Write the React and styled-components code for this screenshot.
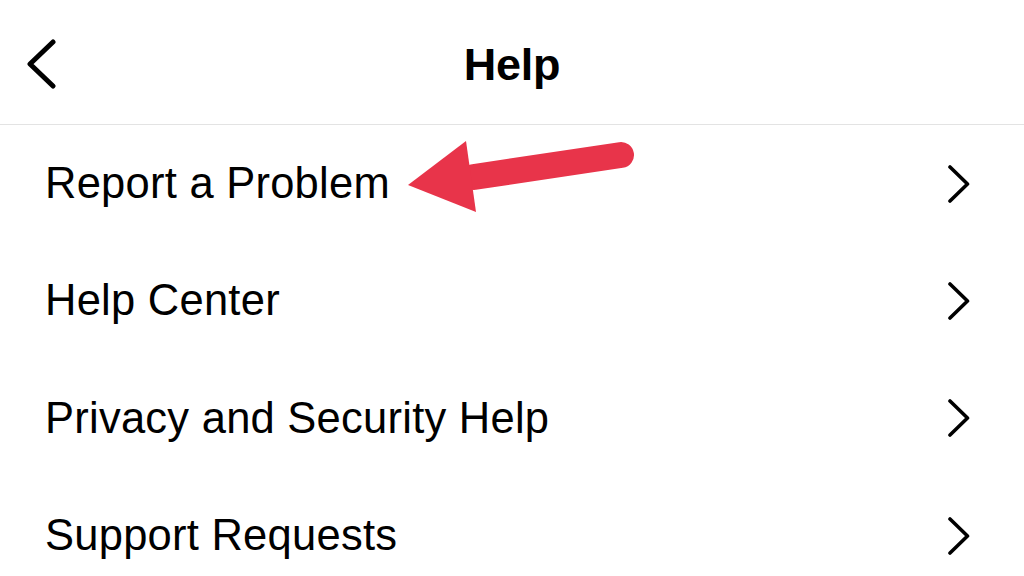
import React from "react";
import styled, { createGlobalStyle } from "styled-components";

const Global = createGlobalStyle`
  html, body { margin: 0; padding: 0; background: #ffffff; }
  body { font-family: "Liberation Sans", Arial, sans-serif; color: #000; }
`;

const Page = styled.div`
  position: relative;
  width: 1024px;
  height: 576px;
  overflow: hidden;
  background: #fff;
`;

const Header = styled.header`
  display: grid;
  grid-template-columns: 1fr auto 1fr;
  align-items: center;
  height: 125px;
  border-bottom: 1px solid #e3e3e3;
  box-sizing: border-box;
  padding: 0 25px;
`;

const BackButton = styled.button`
  justify-self: start;
  display: flex;
  align-items: center;
  border: 0;
  background: none;
  padding: 0;
  margin-top: 4px;
  cursor: pointer;
`;

const Title = styled.h1`
  margin: 0;
  font-size: 45px;
  font-weight: 700;
  letter-spacing: -0.2px;
  margin-top: 6px;
`;

const List = styled.ul`
  list-style: none;
  margin: 0;
  padding: 0;
`;

const Row = styled.li`
  display: flex;
  align-items: center;
  justify-content: space-between;
  height: 117.3px;
  padding: 0 53px 0 45px;
`;

const Label = styled.span`
  font-size: 43.5px;
  font-weight: 400;
  letter-spacing: 0.25px;
`;

const Arrow = styled.svg`
  position: absolute;
  left: 0;
  top: 0;
  pointer-events: none;
`;

const Chevron = ({ dir = "right" }) =>
  dir === "right" ? (
    <svg width="24" height="38" viewBox="0 0 24 38" fill="none">
      <path d="M3 2 L20.5 19 L3 36" stroke="#000" strokeWidth="3.6" strokeLinecap="round" strokeLinejoin="round" />
    </svg>
  ) : (
    <svg width="34" height="50" viewBox="0 0 34 50" fill="none">
      <path d="M28 3 L5 25 L28 47" stroke="#000" strokeWidth="5" strokeLinecap="round" strokeLinejoin="round" />
    </svg>
  );

const items = ["Report a Problem", "Help Center", "Privacy and Security Help", "Support Requests"];

export default function App() {
  return (
    <Page>
      <Global />
      <Header>
        <BackButton aria-label="Back">
          <Chevron dir="left" />
        </BackButton>
        <Title>Help</Title>
        <span />
      </Header>
      <List>
        {items.map((t) => (
          <Row key={t}>
            <Label>{t}</Label>
            <Chevron />
          </Row>
        ))}
      </List>
      <Arrow width="1024" height="576" viewBox="0 0 1024 576">
        <line x1="474" y1="177" x2="621" y2="155" stroke="#E8344A" strokeWidth="26" strokeLinecap="round" />
        <polygon points="408,185 466,141 476,212" fill="#E8344A" />
      </Arrow>
    </Page>
  );
}
